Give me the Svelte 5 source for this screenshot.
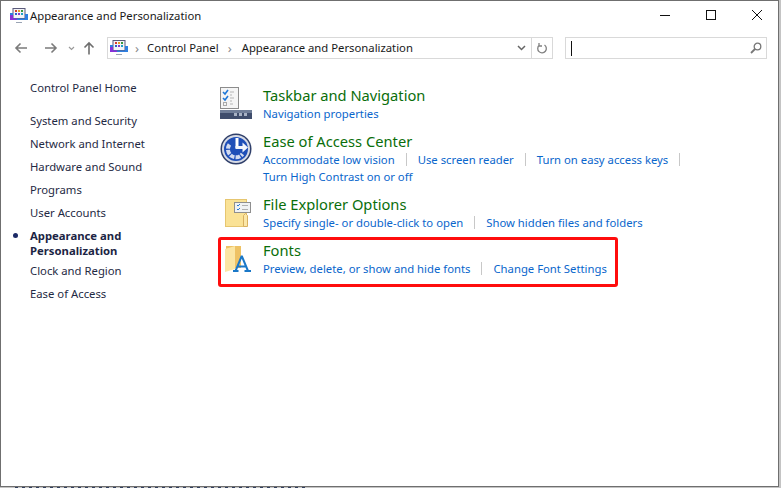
<script>
  const sideLinks = [
    { label: 'Control Panel Home', cls: 'home' },
    { label: 'System and Security' },
    { label: 'Network and Internet' },
    { label: 'Hardware and Sound' },
    { label: 'Programs' },
    { label: 'User Accounts' },
    { label: 'Appearance and Personalization', active: true },
    { label: 'Clock and Region' },
    { label: 'Ease of Access' }
  ];

  const categories = [
    { id: 'taskbar', title: 'Taskbar and Navigation', rows: [['Navigation properties']] },
    {
      id: 'ease',
      title: 'Ease of Access Center',
      rows: [
        ['Accommodate low vision', 'Use screen reader', 'Turn on easy access keys', ''],
        ['Turn High Contrast on or off']
      ]
    },
    {
      id: 'explorer',
      title: 'File Explorer Options',
      rows: [['Specify single- or double-click to open', 'Show hidden files and folders']]
    },
    {
      id: 'fonts',
      title: 'Fonts',
      rows: [['Preview, delete, or show and hide fonts', 'Change Font Settings']]
    }
  ];
</script>

{#snippet cpIcon()}
  <svg class="cp-icon" width="18" height="16" viewBox="0 0 18 16">
    <rect x="3" y="0.5" width="12" height="10" fill="#f4f4f8" stroke="#5a5a7a" />
    <rect x="5" y="2" width="2" height="2" fill="#d83a2e" />
    <rect x="8" y="2" width="2" height="2" fill="#e8a020" />
    <rect x="11" y="2" width="2" height="2" fill="#3a9a3a" />
    <rect x="5" y="5" width="2" height="2" fill="#2a62c8" />
    <rect x="8" y="5" width="2" height="2" fill="#8a3ac8" />
    <rect x="11" y="5" width="2" height="2" fill="#20a0c8" />
    <path d="M0 5h3v5.500h12V6h3v6H0z" fill="#2f7fe0" />
    <path d="M0 7h3v3.500h4V12H0z" fill="#8a2fd8" />
    <path d="M6 14h6v1H6z" fill="#9aa4b4" />
  </svg>
{/snippet}

<div class="window">
  <header class="titlebar">
    {@render cpIcon()}
    <span class="title">Appearance and Personalization</span>
    <div class="controls">
      <svg width="10" height="10" viewBox="0 0 10 10"><path d="M0 5.500h10" stroke="#111" /></svg>
      <svg width="10" height="10" viewBox="0 0 10 10"><rect x="0.500" y="0.500" width="9" height="9" fill="none" stroke="#111" /></svg>
      <svg width="10" height="10" viewBox="0 0 10 10"><path d="M0 0l10 10M10 0L0 10" stroke="#111" /></svg>
    </div>
  </header>

  <nav class="navbar">
    <div class="nav-buttons">
      <svg width="14" height="12" viewBox="0 0 14 12"><path d="M13 6H2M6.500 1.500L2 6l4.500 4.500" fill="none" stroke="#7b7b7b" stroke-width="1.600" /></svg>
      <svg class="fwd" width="14" height="12" viewBox="0 0 14 12"><path d="M1 6h11M7.500 1.500L12 6l-4.500 4.500" fill="none" stroke="#7b7b7b" stroke-width="1.600" /></svg>
      <svg class="recent" width="7" height="5" viewBox="0 0 7 5"><path d="M1 1l2.500 2.500L6 1" fill="none" stroke="#9a9a9a" stroke-width="1.200" /></svg>
      <svg class="up" width="12" height="14" viewBox="0 0 12 14"><path d="M6 13.500V2M1.500 6.500L6 2l4.500 4.500" fill="none" stroke="#6e6e6e" stroke-width="1.600" /></svg>
    </div>
    <div class="address">
      {@render cpIcon()}
      <span class="sep first">›</span>
      <span class="crumb">Control Panel</span>
      <span class="sep wide">›</span>
      <span class="crumb">Appearance and Personalization</span>
      <svg class="drop" width="9" height="6" viewBox="0 0 9 6"><path d="M1 1l3.500 3.500L8 1" fill="none" stroke="#666" stroke-width="1.500" /></svg>
      <div class="refresh">
        <svg width="12" height="13" viewBox="0 0 12 13"><path d="M3.200 3.300A4.300 4.300 0 1 0 8.500 3M3 1v3h3" fill="none" stroke="#808080" stroke-width="1.300" /></svg>
      </div>
    </div>
    <div class="search">
      <span class="caret"></span>
      <svg width="12" height="12" viewBox="0 0 12 12"><circle cx="7.500" cy="4.500" r="3.300" fill="none" stroke="#777" stroke-width="1.300" /><path d="M5 7l-4 4" stroke="#777" stroke-width="1.800" /></svg>
    </div>
  </nav>

  <div class="main">
    <aside class="sidebar">
      {#each sideLinks as link}
        <div class="side-link {link.cls ?? ''}" class:active={link.active}>{link.label}</div>
      {/each}
    </aside>

    <section class="content">
      {#each categories as cat}
        <article class="cat {cat.id}">
          <div class="cat-icon">
            {#if cat.id === 'taskbar'}
              <svg width="32" height="32" viewBox="0 0 32 32">
                <rect x="0.500" y="0.500" width="18" height="21" fill="#f5f5f5" stroke="#8c8c8c" />
                <path d="M3 5l2 2 3-4M3 11l2 2 3-4" fill="none" stroke="#1f78d8" stroke-width="1.600" />
                <rect x="3.500" y="15.500" width="3" height="3" fill="none" stroke="#aaa" />
                <path d="M10 5h4M10 8h2M10 11h4M10 14h2M10 17h3" stroke="#b5b5b5" />
                <rect x="0" y="23" width="32" height="9" fill="#3f4d6c" />
                <rect x="0" y="23" width="32" height="3" fill="#707e98" />
                <rect x="14" y="26" width="3" height="3" fill="#a8b2c4" />
                <rect x="19" y="26" width="3" height="3" fill="#a8b2c4" />
                <rect x="24" y="26" width="3" height="3" fill="#a8b2c4" />
              </svg>
            {:else if cat.id === 'ease'}
              <svg width="32" height="32" viewBox="0 0 32 32">
                <circle cx="16" cy="16" r="15.500" fill="#2f3f6a" />
                <circle cx="16" cy="16" r="14" fill="#d8dce6" />
                <circle cx="16" cy="16" r="12" fill="#1f4fb8" />
                <path d="M9.500 11.500A8 8 0 1 0 22.500 21" fill="none" stroke="#d4dcf0" stroke-width="4" stroke-dasharray="4.500 1.200" />
                <path d="M15.500 5h3v10h-3z" fill="#fff" />
                <path d="M15.500 13h7v-3.500l5.500 5-5.500 5V16h-7z" fill="#f2f5fc" />
              </svg>
            {:else if cat.id === 'explorer'}
              <svg width="32" height="32" viewBox="0 0 32 32">
                <rect x="5.500" y="3.500" width="21" height="27" fill="#fae296" stroke="#e6c670" />
                <path d="M23.500 30.500v-11l2-2 2 2v11z" fill="#fbe7a8" stroke="#d8b060" />
                <rect x="14.500" y="6.500" width="16" height="10" fill="#f0f2f4" stroke="#8f8f8f" />
                <path d="M17 9l1 1 2-2M17 13l1 1 2-2" fill="none" stroke="#2a7ad8" />
                <path d="M22 9.500h6M22 13.500h6" stroke="#b0b0b0" />
              </svg>
            {:else}
              <svg width="32" height="32" viewBox="0 0 32 32">
                <path d="M6 4h15v22H6z" fill="#eec264" />
                <path d="M5 7l10-3v23l-10 3z" fill="#fbe6a4" />
                <path d="M13 29h5.500M24.500 29H31M15.500 29l6-14.500h.5l6 14.500M18 24.500h8" fill="none" stroke="#1a78c8" stroke-width="2" />
              </svg>
            {/if}
          </div>
          <div class="cat-text">
            <div class="cat-title">{cat.title}</div>
            {#each cat.rows as row}
              <div class="cat-row">
                {#each row as item, i}
                  {#if i > 0}<span class="divider"></span>{/if}
                  {#if item}<span class="task">{item}</span>{/if}
                {/each}
              </div>
            {/each}
          </div>
        </article>
      {/each}
      <div class="highlight"></div>
    </section>
  </div>
</div>
<div class="behind"><span class="scrap"></span></div>

<style>
  :global(body) {
    margin: 0;
    background: #c4c4c4;
    overflow: hidden;
  }

  .window {
    width: 779px;
    height: 487px;
    box-sizing: border-box;
    background: #fff;
    border: 1px solid #6f6f6f;
    font-family: "Noto Sans", "Open Sans", sans-serif;
    font-size: 11.3px;
    color: #1a1a1a;
    overflow: hidden;
  }

  .behind {
    height: 1px;
    overflow: hidden;
    padding-left: 15px;
  }

  .scrap {
    display: block;
    width: 290px;
    height: 1px;
    background: repeating-linear-gradient(90deg, #33415f 0 3px, transparent 3px 7px);
  }

  .titlebar {
    display: flex;
    align-items: center;
    height: 30px;
    padding-left: 9px;
    gap: 2px;
  }

  .title {
    padding-bottom: 2px;
  }

  .controls {
    margin-left: auto;
    display: flex;
    gap: 36px;
    padding: 0 16px 2px 0;
  }

  .navbar {
    display: flex;
    align-items: center;
    height: 24px;
    margin-top: 5px;
  }

  .nav-buttons {
    display: flex;
    align-items: center;
    width: 106px;
    padding-left: 13px;
    box-sizing: border-box;
  }

  .fwd { margin-left: 16px; }
  .recent { margin-left: 10px; }
  .up { margin-left: 8px; }

  .address {
    display: flex;
    align-items: center;
    width: 446px;
    height: 22px;
    box-sizing: border-box;
    border: 1px solid #d9d9d9;
    padding-left: 2px;
  }

  .crumb {
    padding-bottom: 2px;
  }

  .sep {
    color: #8a8a8a;
    margin: 0 8px 0 7px;
    font-size: 13px;
    line-height: 1;
  }

  .sep.wide {
    margin: 0 10px 0 9px;
  }

  .drop { margin-left: auto; margin-right: 5px; }

  .refresh {
    display: flex;
    align-items: center;
    justify-content: center;
    width: 20px;
    height: 20px;
    border-left: 1px solid #d9d9d9;
  }

  .search {
    display: flex;
    align-items: center;
    justify-content: space-between;
    width: 202px;
    height: 22px;
    box-sizing: border-box;
    border: 1px solid #d9d9d9;
    margin-left: 12px;
    padding: 0 4px 0 5px;
  }

  .caret {
    width: 1px;
    height: 15px;
    background: #111;
  }

  .main {
    display: flex;
  }

  .sidebar {
    width: 216px;
    flex-shrink: 0;
    padding: 20px 0 0 29px;
    box-sizing: border-box;
  }

  .side-link {
    line-height: 15px;
    margin-bottom: 8px;
    width: 125px;
    color: #1f2a44;
    position: relative;
  }

  .home {
    margin-bottom: 18px;
  }

  .active {
    font-weight: 700;
    margin-bottom: 5px;
    color: #1c2544;
  }

  .active::before {
    content: "";
    position: absolute;
    left: -17px;
    top: 5px;
    width: 5px;
    height: 5px;
    border-radius: 50%;
    background: #1c2a66;
  }

  .content {
    position: relative;
    flex: 1;
    padding-top: 25px;
  }

  .cat {
    display: flex;
    gap: 11px;
    margin-left: 2px;
  }

  .cat-icon {
    width: 32px;
    height: 32px;
    flex-shrink: 0;
    padding: 2px 0 0 1px;
  }

  .taskbar { height: 46px; }
  .ease { height: 63px; }
  .explorer { height: 46px; }

  .cat-title {
    font-size: 14.700px;
    line-height: 20px;
    color: #0a6e0a;
  }

  .cat-row {
    display: flex;
    align-items: center;
    line-height: 16px;
    color: #0a66cc;
    height: 17px;
  }

  .divider {
    width: 1px;
    height: 13px;
    background: #c8c8c8;
    margin: 0 11px;
  }

  .highlight {
    position: absolute;
    left: 1px;
    top: 177px;
    width: 400px;
    height: 50px;
    box-sizing: border-box;
    border: 3px solid #ff0d0d;
    border-radius: 3px;
  }
</style>
